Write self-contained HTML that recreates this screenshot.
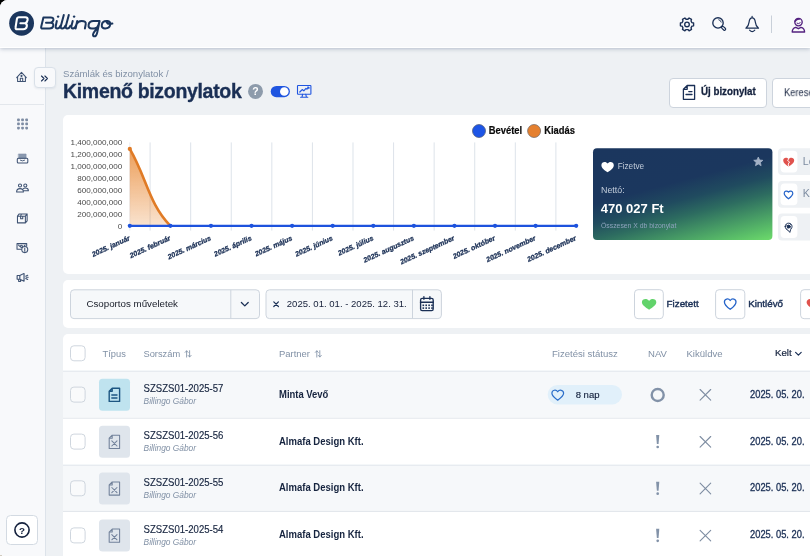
<!DOCTYPE html>
<html lang="hu">
<head>
<meta charset="utf-8">
<title>Billingo</title>
<style>
*{box-sizing:border-box;margin:0;padding:0}
html,body{width:810px;height:556px;overflow:hidden;background:#000}
body{font-family:"Liberation Sans",sans-serif;color:#1a2f55;position:relative}
#app{position:absolute;left:0;top:0;width:810px;height:556px;background:#eef1f4;border-top-left-radius:7.5px;overflow:hidden}
.abs{position:absolute}
#app,#header,#side,.card,.t,svg{will-change:transform}
#header{position:absolute;left:0;top:0;width:810px;height:48px;background:#f8f9fb;border-bottom:1px solid #fff;box-shadow:0 1px 4px rgba(45,70,110,.3);z-index:5}
#side{position:absolute;left:0;top:47px;width:46px;height:509px;background:#f8f9fb;border-right:1.6px solid #dde3ea;z-index:2}
.t{position:absolute;white-space:nowrap;line-height:1}
.card{position:absolute;background:#fff;border-radius:5px}
</style>
</head>
<body>
<div id="app">

<!-- HEADER -->
<div id="header">
<svg class="abs" style="left:0;top:0" width="810" height="48" viewBox="0 0 810 48">
  <!-- logo mark -->
  <circle cx="21.6" cy="23.3" r="12.4" fill="#1b365d"/>
  <path d="M18.6 17.3 H25.4 Q28 17.3 27.6 20 Q27.2 22.6 25.2 23.2 Q27.2 23.8 26.8 26.4 Q26.3 29.3 23.2 29.3 H17.2 Q15.2 29.3 15.6 27.2 L16.9 19.2 Q17.2 17.3 18.9 17.3 M20.4 23.3 H25" fill="none" stroke="#fff" stroke-width="2.1" stroke-linecap="round" stroke-linejoin="round"/>
  <!-- wordmark -->
  <g fill="none" stroke="#1b365d" stroke-width="2" stroke-linecap="round" stroke-linejoin="round">
    <path d="M43.4 17.4 L41.2 26.8 Q40.8 28.6 42.6 28.6 H49.4 Q52.8 28.6 53.3 25.6 Q53.7 23 50.6 22.8 H46 M50.6 22.8 Q53 22.2 53.4 20 Q53.7 17.4 50.6 17.4 H43.4"/>
    <path d="M56.8 21 L55.7 26.2 Q55.3 28.5 57.3 28.4 Q59.4 28.3 60.4 25.8"/>
    <path d="M63.8 14.9 L60.8 26.2 Q60.3 28.5 62.3 28.4 Q64.3 28.3 65.3 25.8"/>
    <path d="M68.8 14.9 L65.8 26.2 Q65.3 28.5 67.3 28.4 Q69.3 28.3 70.3 25.8"/>
    <path d="M72.7 21 L71.4 26.2 Q71 28.5 73 28.4 Q75 28.3 76 25.6"/>
    <path d="M77.2 21 L75.6 28.5 M76.6 24.2 Q77.8 20.9 81.6 20.9 Q86.4 20.9 85.7 24.4 L84.9 28.5"/>
    <path d="M99.6 21 H93.4 Q89.2 21 88.6 24.8 Q88.1 28.4 91.8 28.4 H94.2 Q97.6 28.4 98.4 25 L99.6 21 L97.2 32.6 Q96.2 37 93.8 36.2 Q91.8 35.4 94.6 31.4 Q95.8 29.8 98 28.4"/>
    <path d="M106.8 21 Q102.4 20.8 101.8 24.8 Q101.4 28.4 105.2 28.4 Q109.6 28.4 110.2 24.6 Q110.6 21.4 107.6 21 Q106.4 21 106.8 22.4 Q107.6 24.6 112.4 23.6"/>
  </g>
  <circle cx="58.1" cy="16.6" r="1.2" fill="#1b365d"/>
  <circle cx="74.1" cy="16.6" r="1.2" fill="#1b365d"/>

  <!-- gear -->
  <g fill="none" stroke="#1a2f55" stroke-width="1.35" stroke-linejoin="round" stroke-linecap="round">
    <path d="M693.60 23.00 L693.60 25.80 L691.94 26.18 L691.01 27.79 L691.52 29.42 L689.09 30.82 L687.93 29.57 L686.07 29.57 L684.91 30.82 L682.48 29.42 L682.99 27.79 L682.06 26.18 L680.40 25.80 L680.40 23.00 L682.06 22.62 L682.99 21.01 L682.48 19.38 L684.91 17.98 L686.07 19.23 L687.93 19.23 L689.09 17.98 L691.52 19.38 L691.01 21.01 L691.94 22.62 Z"/>
    <circle cx="687" cy="24.4" r="2.3"/>
  </g>
  <!-- search -->
  <g fill="none" stroke="#1a2f55" stroke-width="1.35" stroke-linecap="round">
    <circle cx="718" cy="22.9" r="5.2"/>
    <path d="M718.8 19.7 A3.2 3.2 0 0 1 721.2 22.1" stroke-width=".9"/>
    <path d="M722.7 27.5 L724.5 29.1" stroke-width="3.5"/>
    <path d="M722.7 27.5 L724.5 29.1" stroke-width="1.1" stroke="#f8f9fb"/>
  </g>
  <!-- bell -->
  <g fill="none" stroke="#1a2f55" stroke-width="1.25" stroke-linecap="round" stroke-linejoin="round">
    <path d="M752.1 16.4 V17.8 M752.1 17.8 C749.7 17.8 749.3 20 749.1 22 C748.9 24.6 748.2 26.2 745.9 28.2 H758.5 C756.2 26.2 755.5 24.6 755.3 22 C755.1 20 754.7 17.8 752.1 17.8 Z"/>
    <path d="M749.6 30.2 Q752.2 32.9 754.8 30.2" stroke-width="1.15"/>
  </g>
  <!-- divider -->
  <rect x="771" y="15.5" width="1" height="17.5" fill="#c9d0d9"/>
  <!-- avatar -->
  <g fill="none" stroke="#53217f" stroke-width="1.35" stroke-linecap="round" stroke-linejoin="round">
    <circle cx="798.5" cy="22.1" r="3.7"/>
    <path d="M795.2 21.2 Q796.4 18.8 799.4 19" stroke-width="1.6"/>
    <path d="M797 23.3 Q798.6 24.4 800.2 22.8" stroke-width="1"/>
    <path d="M792.2 32 Q792.4 27.8 795.8 27.3 L798.4 28.7 L801 27.3 Q804.4 27.8 804.6 32 Z"/>
  </g>
</svg>
</div>

<!-- SIDEBAR -->
<div id="side">
<div class="abs" style="left:0;top:57px;width:44px;height:1px;background:#e3e7ec"></div>
<svg class="abs" style="left:0;top:0" width="44" height="509" viewBox="0 47 44 509">
 <g fill="none" stroke="#3f5373" stroke-width="1.05" stroke-linejoin="round" stroke-linecap="round">
  <!-- home -->
  <path d="M16.7 77.6 L21.5 72.3 L26.3 77.6 M17.6 77 V81.4 H25.4 V77 M20.3 81.4 V78.3 H22.7 V81.4"/>
  <circle cx="21.5" cy="75.9" r=".55" fill="#3f5373"/>
  <!-- inbox -->
  <rect x="18.7" y="154" width="7.4" height="4.6" fill="#8a99af" stroke="#7f8fa6" stroke-width=".6"/>
  <rect x="17.3" y="158.3" width="10.5" height="4.6" rx="1"/>
  <path d="M20.4 160.3 Q22.5 161.6 24.6 160.3" stroke-width=".9"/>
  <!-- people -->
  <circle cx="20" cy="185.5" r="1.55"/><circle cx="25.3" cy="185.5" r="1.55"/>
  <path d="M16.6 192 Q16.6 188.6 20 188.6 Q23.4 188.6 23.4 192 Z"/>
  <path d="M23.2 188.8 Q24 188 25.3 188 Q28.4 188 28.4 190.8 H23.6"/>
  <!-- box -->
  <g transform="translate(22.3 218.4) scale(.88 .86) translate(-21.5 -218.2)"><path d="M16 215.6 L18 213 H27 V221 L25 223.4 H16 Z M16 215.6 H25 V223.4 M25 215.6 L27 213 M19.6 215.6 V218.6 H22 V215.6 M20.6 213 L19.6 215.6" stroke-width="1.2"/></g>
  <!-- money -->
  <g transform="translate(22.3 248.1) scale(.88 .9) translate(-21.6 -248.4)" stroke-width="1.2"><path d="M15.6 243.4 H26.6 V246.4 M15.6 243.4 V249.6 H20.4 M17.4 245 L18.6 246.4 M24.8 245 L23.8 246"/>
  <circle cx="24.4" cy="250" r="3.4"/><path d="M24.4 248.2 V251.8"/>
  <circle cx="20.6" cy="246.4" r="1.2"/></g>
  <!-- megaphone -->
  <g transform="translate(22.6 277.5) scale(.96 .82) translate(-21.5 -278)" stroke-width="1.2"><path d="M15.8 275.6 H18.6 L23 273 V282.6 L18.6 280 H15.8 Z M18.6 275.6 V280 M17.4 280 V283 H19.4 V280.4 M24.8 276.4 L26.8 275.2 M24.8 279.2 L26.8 280.4 M25.2 277.8 H27.4"/></g>
 </g>
 <!-- grid -->
 <g fill="#7d8ca3">
  <rect x="17.1" y="118.5" width="2.7" height="2.7" rx=".8"/><rect x="21.2" y="118.5" width="2.7" height="2.7" rx=".8"/><rect x="25.3" y="118.5" width="2.7" height="2.7" rx=".8"/>
  <rect x="17.1" y="122.6" width="2.7" height="2.7" rx=".8"/><rect x="21.2" y="122.6" width="2.7" height="2.7" rx=".8"/><rect x="25.3" y="122.6" width="2.7" height="2.7" rx=".8"/>
  <rect x="17.1" y="126.7" width="2.7" height="2.7" rx=".8"/><rect x="21.2" y="126.7" width="2.7" height="2.7" rx=".8"/><rect x="25.3" y="126.7" width="2.7" height="2.7" rx=".8"/>
 </g>
</svg>
<!-- help -->
<div class="abs" style="left:6.2px;top:467.9px;width:31.7px;height:29.9px;background:#fff;border:1px solid #d3dae2;border-radius:4.5px"></div>
<svg class="abs" style="left:14.1px;top:474.8px;overflow:visible" width="16" height="16" viewBox="0 0 16 16"><circle cx="8" cy="8" r="7.1" fill="none" stroke="#14213d" stroke-width="1.6"/><text x="8" y="11.5" font-family="Liberation Sans" font-size="9.8" font-weight="bold" fill="#14213d" text-anchor="middle">?</text></svg>
</div>
<!-- expand button -->
<div class="abs" style="left:34.2px;top:67.3px;width:21.4px;height:21.2px;background:#f8f9fb;border:1px solid #d9e0e8;border-radius:4px;z-index:3;box-shadow:0 1px 2px rgba(40,60,90,.08)"></div>
<svg class="abs" style="left:33.7px;top:67.5px;z-index:4" width="21" height="21" viewBox="0 0 21 21"><path d="M7.5 8 L10 10.5 L7.5 13 M10.9 8 L13.4 10.5 L10.9 13" fill="none" stroke="#1a2f55" stroke-width="1.1" stroke-linecap="round" stroke-linejoin="round"/></svg>

<!-- TITLE -->
<div class="t" id="bc" style="left:63px;top:69px;font-size:9.6px;color:#8090a5">Számlák és bizonylatok /</div>
<div class="t" id="ttl" style="left:63px;top:82.1px;font-size:19.5px;font-weight:bold;color:#1a2f55;letter-spacing:-.32px;-webkit-text-stroke:.35px #1a2f55">Kimenő bizonylatok</div>
<svg class="abs" style="left:245px;top:80px" width="70" height="22" viewBox="245 80 70 22">
  <circle cx="255.5" cy="91.4" r="7.5" fill="#8d9bab"/>
  <text x="255.5" y="95.2" font-family="Liberation Sans" font-size="10.5" font-weight="bold" fill="#fff" text-anchor="middle">?</text>
  <rect x="270.7" y="85.9" width="19.2" height="11.3" rx="5.65" fill="#1f55e0"/>
  <circle cx="284.3" cy="91.55" r="4.3" fill="#fff"/>
  <g fill="none" stroke="#1f55e0" stroke-width="1.1" stroke-linejoin="round" stroke-linecap="round">
    <rect x="297.5" y="85.5" width="13.4" height="8.8" rx=".6"/>
    <path d="M302.6 94.3 L302 97.2 M305.8 94.3 L306.4 97.2 M300.6 97.3 H307.8"/>
    <path d="M299.8 92 L302.2 89.6 L303.8 90.8 L306 88.4 L307 89.2 L308.8 87.4" stroke-width="1.2"/>
    <path d="M307.4 87.2 H308.9 V88.7" stroke-width="1"/>
  </g>
</svg>
<!-- buttons -->
<div class="abs" style="left:669px;top:78px;width:98px;height:30px;background:#fff;border:1px solid #cdd4dd;border-radius:4px"></div>
<svg class="abs" style="left:681px;top:84px" width="16" height="18" viewBox="681 84 16 18"><g fill="none" stroke="#1a2f55" stroke-width="1.15" stroke-linejoin="round" stroke-linecap="round"><path d="M687.2 85.5 H694.6 V99.3 H683.4 V89.3 Z M687.2 85.5 V89.3 H683.4 M688.8 91.6 H692 M686 94.5 H692" stroke-width="1.3"/></g></svg>
<div class="t" id="b1" style="left:701px;top:87.2px;font-size:9.75px;font-weight:bold;color:#14213d;-webkit-text-stroke:.28px #14213d;transform:scale(1,1.07);transform-origin:0 78%">Új bizonylat</div>
<div class="abs" style="left:772px;top:78px;width:60px;height:30px;background:#fff;border:1px solid #cdd4dd;border-radius:4px"></div>
<div class="t" id="b2" style="left:783.7px;top:87.6px;font-size:9.9px;color:#14213d;transform:scale(.95,1.1);transform-origin:0 78%">Keresés</div>

<!-- CHART CARD -->
<div class="card" id="chart" style="left:63px;top:115px;width:760px;height:159px">
<svg class="abs" style="left:0;top:0" width="747" height="160" viewBox="63 115.2 747 160">
<defs><linearGradient id="og" x1="0" y1="0" x2="0" y2="1"><stop offset="0" stop-color="#e67e22" stop-opacity=".75"/><stop offset="1" stop-color="#e67e22" stop-opacity=".22"/></linearGradient>
<linearGradient id="cg" gradientUnits="userSpaceOnUse" x1="665.2" y1="129.1" x2="700.2" y2="259.5"><stop offset="0" stop-color="#1b365e"/><stop offset=".40" stop-color="#1b375e"/><stop offset=".54" stop-color="#204b5f"/><stop offset=".66" stop-color="#2d6c60"/><stop offset=".80" stop-color="#469a65"/><stop offset=".91" stop-color="#5abe68"/><stop offset="1" stop-color="#6ddb6b"/></linearGradient></defs>
<rect x="149.59" y="142.6" width="1" height="88.2" fill="#dde3ea"/>
<rect x="190.17" y="142.6" width="1" height="88.2" fill="#dde3ea"/>
<rect x="230.75" y="142.6" width="1" height="88.2" fill="#dde3ea"/>
<rect x="271.33" y="142.6" width="1" height="88.2" fill="#dde3ea"/>
<rect x="311.91" y="142.6" width="1" height="88.2" fill="#dde3ea"/>
<rect x="352.49" y="142.6" width="1" height="88.2" fill="#dde3ea"/>
<rect x="393.07" y="142.6" width="1" height="88.2" fill="#dde3ea"/>
<rect x="433.65" y="142.6" width="1" height="88.2" fill="#dde3ea"/>
<rect x="474.23" y="142.6" width="1" height="88.2" fill="#dde3ea"/>
<rect x="514.81" y="142.6" width="1" height="88.2" fill="#dde3ea"/>
<rect x="555.39" y="142.6" width="1" height="88.2" fill="#dde3ea"/>
<rect x="129.30" y="142.6" width="1" height="88.2" fill="#e8ecf1"/>
<text x="122.3" y="145.50" font-family="Liberation Sans" font-size="8.1" fill="#4a4a4a" text-anchor="end">1,400,000,000</text>
<text x="122.3" y="157.41" font-family="Liberation Sans" font-size="8.1" fill="#4a4a4a" text-anchor="end">1,200,000,000</text>
<text x="122.3" y="169.33" font-family="Liberation Sans" font-size="8.1" fill="#4a4a4a" text-anchor="end">1,000,000,000</text>
<text x="122.3" y="181.24" font-family="Liberation Sans" font-size="8.1" fill="#4a4a4a" text-anchor="end">800,000,000</text>
<text x="122.3" y="193.16" font-family="Liberation Sans" font-size="8.1" fill="#4a4a4a" text-anchor="end">600,000,000</text>
<text x="122.3" y="205.07" font-family="Liberation Sans" font-size="8.1" fill="#4a4a4a" text-anchor="end">400,000,000</text>
<text x="122.3" y="216.98" font-family="Liberation Sans" font-size="8.1" fill="#4a4a4a" text-anchor="end">200,000,000</text>
<text x="122.3" y="228.90" font-family="Liberation Sans" font-size="8.1" fill="#4a4a4a" text-anchor="end">0</text>
<path d="M129.80 149.1 C 146.8 178.5 149 204.2 170.38 226 L 129.80 226 Z" fill="url(#og)"/>
<path d="M129.80 149.1 C 146.8 178.5 149 204.2 170.38 226" fill="none" stroke="#e07b26" stroke-width="2.6" stroke-linecap="round"/>
<circle cx="129.80" cy="149.1" r="2.1" fill="#e07b26"/>
<path d="M129.80 226 H576.18" stroke="#1d52dd" stroke-width="2.3" stroke-linecap="round"/>
<circle cx="129.80" cy="226" r="2.1" fill="#1d52dd"/>
<circle cx="170.38" cy="226" r="2.1" fill="#1d52dd"/>
<circle cx="210.96" cy="226" r="2.1" fill="#1d52dd"/>
<circle cx="251.54" cy="226" r="2.1" fill="#1d52dd"/>
<circle cx="292.12" cy="226" r="2.1" fill="#1d52dd"/>
<circle cx="332.70" cy="226" r="2.1" fill="#1d52dd"/>
<circle cx="373.28" cy="226" r="2.1" fill="#1d52dd"/>
<circle cx="413.86" cy="226" r="2.1" fill="#1d52dd"/>
<circle cx="454.44" cy="226" r="2.1" fill="#1d52dd"/>
<circle cx="495.02" cy="226" r="2.1" fill="#1d52dd"/>
<circle cx="535.60" cy="226" r="2.1" fill="#1d52dd"/>
<circle cx="576.18" cy="226" r="2.1" fill="#1d52dd"/>
<text transform="translate(128.30 235.2) rotate(-24.8)" x="0" y="5.2" font-family="Liberation Sans" font-size="7.1" font-weight="bold" font-style="italic" fill="#1a2f55" stroke="#1a2f55" stroke-width=".28" text-anchor="end">2025. január</text>
<text transform="translate(168.88 235.2) rotate(-24.8)" x="0" y="5.2" font-family="Liberation Sans" font-size="7.1" font-weight="bold" font-style="italic" fill="#1a2f55" stroke="#1a2f55" stroke-width=".28" text-anchor="end">2025. február</text>
<text transform="translate(209.46 235.2) rotate(-24.8)" x="0" y="5.2" font-family="Liberation Sans" font-size="7.1" font-weight="bold" font-style="italic" fill="#1a2f55" stroke="#1a2f55" stroke-width=".28" text-anchor="end">2025. március</text>
<text transform="translate(250.04 235.2) rotate(-24.8)" x="0" y="5.2" font-family="Liberation Sans" font-size="7.1" font-weight="bold" font-style="italic" fill="#1a2f55" stroke="#1a2f55" stroke-width=".28" text-anchor="end">2025. április</text>
<text transform="translate(290.62 235.2) rotate(-24.8)" x="0" y="5.2" font-family="Liberation Sans" font-size="7.1" font-weight="bold" font-style="italic" fill="#1a2f55" stroke="#1a2f55" stroke-width=".28" text-anchor="end">2025. május</text>
<text transform="translate(331.20 235.2) rotate(-24.8)" x="0" y="5.2" font-family="Liberation Sans" font-size="7.1" font-weight="bold" font-style="italic" fill="#1a2f55" stroke="#1a2f55" stroke-width=".28" text-anchor="end">2025. június</text>
<text transform="translate(371.78 235.2) rotate(-24.8)" x="0" y="5.2" font-family="Liberation Sans" font-size="7.1" font-weight="bold" font-style="italic" fill="#1a2f55" stroke="#1a2f55" stroke-width=".28" text-anchor="end">2025. július</text>
<text transform="translate(412.36 235.2) rotate(-24.8)" x="0" y="5.2" font-family="Liberation Sans" font-size="7.1" font-weight="bold" font-style="italic" fill="#1a2f55" stroke="#1a2f55" stroke-width=".28" text-anchor="end">2025. augusztus</text>
<text transform="translate(452.94 235.2) rotate(-24.8)" x="0" y="5.2" font-family="Liberation Sans" font-size="7.1" font-weight="bold" font-style="italic" fill="#1a2f55" stroke="#1a2f55" stroke-width=".28" text-anchor="end">2025. szeptember</text>
<text transform="translate(493.52 235.2) rotate(-24.8)" x="0" y="5.2" font-family="Liberation Sans" font-size="7.1" font-weight="bold" font-style="italic" fill="#1a2f55" stroke="#1a2f55" stroke-width=".28" text-anchor="end">2025. október</text>
<text transform="translate(534.10 235.2) rotate(-24.8)" x="0" y="5.2" font-family="Liberation Sans" font-size="7.1" font-weight="bold" font-style="italic" fill="#1a2f55" stroke="#1a2f55" stroke-width=".28" text-anchor="end">2025. november</text>
<text transform="translate(574.68 235.2) rotate(-24.8)" x="0" y="5.2" font-family="Liberation Sans" font-size="7.1" font-weight="bold" font-style="italic" fill="#1a2f55" stroke="#1a2f55" stroke-width=".28" text-anchor="end">2025. december</text>
<circle cx="479" cy="131.2" r="6.5" fill="#1d55e6" stroke="#4a5670" stroke-width=".7"/>
<text x="488.7" y="134.5" font-family="Liberation Sans" font-size="10.7" font-weight="bold" fill="#0a0a0a" stroke="#0a0a0a" stroke-width=".2" textLength="33.4" lengthAdjust="spacingAndGlyphs">Bevétel</text>
<circle cx="534.1" cy="131.2" r="6.5" fill="#e5802f" stroke="#6b6260" stroke-width=".7"/>
<text x="544.2" y="134.5" font-family="Liberation Sans" font-size="10.7" font-weight="bold" fill="#0a0a0a" stroke="#0a0a0a" stroke-width=".2" textLength="30.7" lengthAdjust="spacingAndGlyphs">Kiadás</text>
<rect x="593" y="148.5" width="179.4" height="91.6" rx="4" fill="url(#cg)"/>
<path d="M607.6 172.4 C604.4 170.4 601.4 168.2 601.4 165.4 C601.4 161.8 606 161.2 607.6 163.8 C609.2 161.2 613.8 161.8 613.8 165.4 C613.8 168.2 610.8 170.4 607.6 172.4 Z" fill="#fff"/>
<text x="617.7" y="169.6" font-family="Liberation Sans" font-size="8.2" fill="#c3cddb">Fizetve</text>
<polygon points="758.30,157.20 759.59,160.22 762.87,160.52 760.39,162.68 761.12,165.88 758.30,164.20 755.48,165.88 756.21,162.68 753.73,160.52 757.01,160.22" fill="#a3b2c6" stroke="#a3b2c6" stroke-width=".8" stroke-linejoin="round"/>
<text x="601" y="193.2" font-family="Liberation Sans" font-size="8.9" fill="#c3cddb">Nettó:</text>
<text x="600.8" y="213.2" font-family="Liberation Sans" font-size="13" font-weight="bold" fill="#fff">470 027 Ft</text>
<text x="601" y="228.6" font-family="Liberation Sans" font-size="6.85" fill="#8ea3bd">Összesen X db bizonylat</text>
<rect x="778" y="148.5" width="40" height="26.8" rx="4" fill="#eef1f4"/>
<rect x="780.6" y="151.0" width="16.8" height="21.8" rx="4" fill="#fff"/>
<rect x="778" y="181.1" width="40" height="26.8" rx="4" fill="#eef1f4"/>
<rect x="780.6" y="183.6" width="16.8" height="21.8" rx="4" fill="#fff"/>
<rect x="778" y="213.8" width="40" height="26.8" rx="4" fill="#eef1f4"/>
<rect x="780.6" y="216.3" width="16.8" height="21.8" rx="4" fill="#fff"/>
<path d="M788.6 166.8 C785.8 164.8 783.2 163 783.2 160.6 C783.2 157.8 786.8 157.2 788.6 159.4 C790.4 157.2 794.2 157.8 794.2 160.6 C794.2 163 791.4 164.8 788.6 166.8 Z" fill="#e0524d"/>
<path d="M788.8 158.8 L787.6 160.8 L789.6 162.2 L788.2 164.2 L788.8 166.6" fill="none" stroke="#fff" stroke-width=".9"/>
<text x="802.8" y="165" font-family="Liberation Sans" font-size="10.6" fill="#7d8ca1">Lejárt</text>
<path d="M788.5 199 C786 197.2 784.2 195.6 784.2 193.5 C784.2 191 787.2 190.5 788.5 192.4 C789.8 190.5 792.8 191 792.8 193.5 C792.8 195.6 791 197.2 788.5 199 Z" fill="none" stroke="#2463c9" stroke-width="1.2" stroke-linejoin="round"/>
<text x="802.8" y="197.6" font-family="Liberation Sans" font-size="10.6" fill="#7d8ca1">Kintlévő</text>
<g fill="none" stroke="#1a2f55" stroke-width="1" stroke-linejoin="round" stroke-linecap="round"><path d="M785.2 226.8 C785.2 224.6 786.8 223.4 788.6 223.4 C790.6 223.4 792 224.8 792 226.6 C792 228.2 791.2 229 790.6 229.8 L789.8 232.6 L788 230.4 C786.4 230 785.2 228.6 785.2 226.8 Z"/><circle cx="788.6" cy="226.8" r="1.5" fill="#1a2f55"/><path d="M786.2 225.2 L791 228.4 M787 228.6 L790.6 224.6" stroke-width=".7"/></g>
</svg>
</div>

<!-- TOOLBAR CARD -->
<div class="card" id="toolbar" style="left:63px;top:280.2px;width:760px;height:48.1px">
<svg class="abs" style="left:0;top:0" width="747" height="48" viewBox="63 280.1 747 48">
<rect x="70.5" y="289.9" width="189" height="28.8" rx="3.5" fill="#f6f8fa" stroke="#cdd4dd" stroke-width="1"/>
<rect x="230.3" y="289.9" width="1" height="28.8" fill="#cdd4dd"/>
<text x="86.4" y="307.2" font-family="Liberation Sans" font-size="9.75" fill="#181c28">Csoportos műveletek</text>
<path d="M241.4 302.6 L244.8 306 L248.2 302.6" fill="none" stroke="#1a2f55" stroke-width="1.3" stroke-linecap="round" stroke-linejoin="round"/>
<rect x="266" y="289.9" width="175.4" height="28.8" rx="3.5" fill="#f6f8fa" stroke="#cdd4dd" stroke-width="1"/>
<rect x="412" y="289.9" width="1" height="28.8" fill="#cdd4dd"/>
<path d="M273.8 302 L278.4 306.6 M278.4 302 L273.8 306.6" fill="none" stroke="#1a2f55" stroke-width="1.2" stroke-linecap="round"/>
<text x="286.8" y="307.2" font-family="Liberation Sans" font-size="9.55" fill="#16203a">2025. 01. 01. - 2025. 12. 31.</text>
<g fill="none" stroke="#1a2f55" stroke-width="1.35" stroke-linejoin="round" stroke-linecap="round"><rect x="420.6" y="298.4" width="12.6" height="12.4" rx="1.6"/><path d="M420.6 302.4 H433.2" stroke-width="1.6"/><path d="M423.9 296.8 V299.4 M429.9 296.8 V299.4"/></g>
<g fill="#1a2f55"><rect x="422.5" y="304.6" width="1.6" height="1.6"/><rect x="422.5" y="307.4" width="1.6" height="1.6"/><rect x="425.4" y="304.6" width="1.6" height="1.6"/><rect x="425.4" y="307.4" width="1.6" height="1.6"/><rect x="428.3" y="304.6" width="1.6" height="1.6"/><rect x="428.3" y="307.4" width="1.6" height="1.6"/><rect x="431.2" y="304.6" width="1.6" height="1.6"/><rect x="431.2" y="307.4" width="1.6" height="1.6"/></g>
<rect x="634.5" y="289.8" width="28.8" height="29" rx="3.5" fill="#fff" stroke="#cdd4dd"/>
<path d="M649.1 309.8 C645.4 307.4 641.9 305.2 641.9 302.4 C641.9 298.8 646.9 298 649.1 301 C651.3 298 656.3 298.8 656.3 302.4 C656.3 305.2 652.8 307.4 649.1 309.8 Z" fill="#62d36b"/>
<text x="666.6" y="307.6" font-family="Liberation Sans" font-size="9.8" fill="#1a2f55" stroke="#1a2f55" stroke-width=".4">Fizetett</text>
<rect x="715.6" y="289.8" width="29.2" height="29" rx="3.5" fill="#fff" stroke="#cdd4dd"/>
<path d="M730.2 309.4 C727 307 724.4 304.8 724.4 302 C724.4 298.8 728.4 298 730.2 300.6 C732 298 736 298.8 736 302 C736 304.8 733.4 307 730.2 309.4 Z" fill="none" stroke="#2463c9" stroke-width="1.3" stroke-linejoin="round"/>
<text x="748.2" y="307.6" font-family="Liberation Sans" font-size="9.8" fill="#1a2f55" stroke="#1a2f55" stroke-width=".4">Kintlévő</text>
<rect x="800.6" y="289.8" width="29.2" height="29" rx="3.5" fill="#fff" stroke="#cdd4dd"/>
<path d="M813.8 309.8 C810.1 307.4 806.6 305.2 806.6 302.4 C806.6 298.8 811.6 298 813.8 301 C816 298 821 298.8 821 302.4 C821 305.2 817.5 307.4 813.8 309.8 Z" fill="#e0524d"/>
</svg></div>

<!-- TABLE CARD -->
<div class="card" id="table" style="left:63px;top:334.3px;width:760px;height:230px;overflow:hidden">
<svg class="abs" style="left:0;top:0" width="747" height="222" viewBox="63 334.3 747 222">
<rect x="63" y="371.00" width="760" height="46.80" fill="#f6f8fa"/>
<rect x="63" y="465.00" width="760" height="46.80" fill="#f6f8fa"/>
<rect x="63" y="371.00" width="760" height="1" fill="#e1e6ec"/>
<rect x="63" y="418.00" width="760" height="1" fill="#e1e6ec"/>
<rect x="63" y="465.00" width="760" height="1" fill="#e1e6ec"/>
<rect x="63" y="511.20" width="760" height="1" fill="#e1e6ec"/>
<rect x="70.5" y="346.1" width="14.6" height="15" rx="3.4" fill="#fff" stroke="#cfd6de" stroke-width="1"/>
<text x="102.6" y="357.2" font-family="Liberation Sans" font-size="9.3" fill="#8090a5">Típus</text>
<text x="143.5" y="357.2" font-family="Liberation Sans" font-size="9.3" fill="#8090a5">Sorszám</text>
<text x="279" y="357.2" font-family="Liberation Sans" font-size="9.45" fill="#8090a5">Partner</text>
<g fill="none" stroke="#8090a5" stroke-width=".85" stroke-linecap="round" stroke-linejoin="round"><path d="M186.6 357.4 V351.2 M185.1 352.7 L186.6 351.1 L188.1 352.7"/><path d="M189.6 351.0 V357.2 M188.1 355.7 L189.6 357.3 L191.1 355.7"/></g>
<g fill="none" stroke="#8090a5" stroke-width=".85" stroke-linecap="round" stroke-linejoin="round"><path d="M316.8 357.4 V351.2 M315.3 352.7 L316.8 351.1 L318.3 352.7"/><path d="M319.8 351.0 V357.2 M318.3 355.7 L319.8 357.3 L321.3 355.7"/></g>
<text x="552" y="357.2" font-family="Liberation Sans" font-size="9.55" fill="#8090a5">Fizetési státusz</text>
<text x="648" y="357.2" font-family="Liberation Sans" font-size="9.55" fill="#8090a5">NAV</text>
<text x="686.5" y="357.2" font-family="Liberation Sans" font-size="9.55" fill="#8090a5">Kiküldve</text>
<text x="775" y="356.0" font-family="Liberation Sans" font-size="9.7" fill="#14213d" stroke="#14213d" stroke-width=".18">Kelt</text>
<path d="M795.6 352.6 L798.4 355.4 L801.2 352.6" fill="none" stroke="#1a2f55" stroke-width="1.2" stroke-linecap="round" stroke-linejoin="round"/>
<rect x="70.5" y="387.4" width="14.6" height="15" rx="3.4" fill="#f9fafb" stroke="#cfd6de" stroke-width="1"/>
<rect x="99" y="379.0" width="31" height="32" rx="3.5" fill="#bfe3ef"/>
<g fill="none" stroke="#1d5682" stroke-width="1.40" stroke-linejoin="round" stroke-linecap="round"><path d="M112.2 388.5 H119.6 V401.7 H109.2 V391.5 Z M112.2 388.5 V391.5 H109.2"/>
<path d="M111.8 395.3 H117.0 M111.8 398.3 H117.0"/></g>
<text x="143.6" y="392.2" font-family="Liberation Sans" font-size="10.15" fill="#16243f" stroke="#16243f" stroke-width=".15" textLength="79.8" lengthAdjust="spacingAndGlyphs">SZSZS01-2025-57</text>
<text x="143.6" y="404.6" font-family="Liberation Sans" font-size="8.35" font-style="italic" fill="#8090a5">Billingo Gábor</text>
<text x="279" y="397.9" font-family="Liberation Sans" font-size="10.4" font-weight="bold" fill="#16243f" textLength="49.4" lengthAdjust="spacingAndGlyphs">Minta Vevő</text>
<rect x="547.7" y="385.3" width="74.3" height="19.4" rx="9.7" fill="#e1f0fa"/>
<path d="M557.7 400.5 C554.4 398.1 551.9 396.0 551.9 393.5 C551.9 390.2 556.1 389.5 557.7 392.1 C559.3 389.5 563.6 390.2 563.6 393.5 C563.6 396.0 561.0 398.1 557.7 400.5 Z" fill="none" stroke="#2a6dc9" stroke-width="1.2" stroke-linejoin="round"/>
<text x="575.7" y="398.3" font-family="Liberation Sans" font-size="9.5" fill="#14213d" stroke="#14213d" stroke-width=".15">8 nap</text>
<circle cx="657.7" cy="395.3" r="6" fill="none" stroke="#8292a8" stroke-width="2.4"/>
<path d="M700.1 389.8 L710.7 400.4 M710.7 389.8 L700.1 400.4" fill="none" stroke="#7d8ca1" stroke-width="1.1" stroke-linecap="round"/>
<text x="750" y="397.9" font-family="Liberation Sans" font-size="10.1" fill="#1a2f55" stroke="#1a2f55" stroke-width=".3" textLength="54.5" lengthAdjust="spacingAndGlyphs">2025. 05. 20.</text>
<rect x="70.5" y="434.4" width="14.6" height="15" rx="3.4" fill="#fff" stroke="#cfd6de" stroke-width="1"/>
<rect x="99" y="426.0" width="31" height="32" rx="3.5" fill="#dfe5ec"/>
<g fill="none" stroke="#71819a" stroke-width="1.05" stroke-linejoin="round" stroke-linecap="round"><path d="M112.2 435.5 H119.6 V448.7 H109.2 V438.5 Z M112.2 435.5 V438.5 H109.2"/>
<path d="M111.8 441.1 L117.0 446.3 M117.0 441.1 L111.8 446.3"/></g>
<text x="143.6" y="439.2" font-family="Liberation Sans" font-size="10.15" fill="#16243f" stroke="#16243f" stroke-width=".15" textLength="79.8" lengthAdjust="spacingAndGlyphs">SZSZS01-2025-56</text>
<text x="143.6" y="451.6" font-family="Liberation Sans" font-size="8.35" font-style="italic" fill="#8090a5">Billingo Gábor</text>
<text x="279" y="444.9" font-family="Liberation Sans" font-size="10.4" font-weight="bold" fill="#16243f" textLength="84.6" lengthAdjust="spacingAndGlyphs">Almafa Design Kft.</text>
<path d="M656.10 435.30 H659.30 L658.55 444.40 H656.85 Z" fill="#8292a8"/><circle cx="657.70" cy="447.30" r="1.35" fill="#8292a8"/>
<path d="M700.1 436.8 L710.7 447.4 M710.7 436.8 L700.1 447.4" fill="none" stroke="#7d8ca1" stroke-width="1.1" stroke-linecap="round"/>
<text x="750" y="444.9" font-family="Liberation Sans" font-size="10.1" fill="#1a2f55" stroke="#1a2f55" stroke-width=".3" textLength="54.5" lengthAdjust="spacingAndGlyphs">2025. 05. 20.</text>
<rect x="70.5" y="481.1" width="14.6" height="15" rx="3.4" fill="#f9fafb" stroke="#cfd6de" stroke-width="1"/>
<rect x="99" y="472.7" width="31" height="32" rx="3.5" fill="#dfe5ec"/>
<g fill="none" stroke="#71819a" stroke-width="1.05" stroke-linejoin="round" stroke-linecap="round"><path d="M112.2 482.2 H119.6 V495.4 H109.2 V485.2 Z M112.2 482.2 V485.2 H109.2"/>
<path d="M111.8 487.8 L117.0 493.0 M117.0 487.8 L111.8 493.0"/></g>
<text x="143.6" y="485.9" font-family="Liberation Sans" font-size="10.15" fill="#16243f" stroke="#16243f" stroke-width=".15" textLength="79.8" lengthAdjust="spacingAndGlyphs">SZSZS01-2025-55</text>
<text x="143.6" y="498.3" font-family="Liberation Sans" font-size="8.35" font-style="italic" fill="#8090a5">Billingo Gábor</text>
<text x="279" y="491.6" font-family="Liberation Sans" font-size="10.4" font-weight="bold" fill="#16243f" textLength="84.6" lengthAdjust="spacingAndGlyphs">Almafa Design Kft.</text>
<path d="M656.10 482.00 H659.30 L658.55 491.10 H656.85 Z" fill="#8292a8"/><circle cx="657.70" cy="494.00" r="1.35" fill="#8292a8"/>
<path d="M700.1 483.5 L710.7 494.1 M710.7 483.5 L700.1 494.1" fill="none" stroke="#7d8ca1" stroke-width="1.1" stroke-linecap="round"/>
<text x="750" y="491.6" font-family="Liberation Sans" font-size="10.1" fill="#1a2f55" stroke="#1a2f55" stroke-width=".3" textLength="54.5" lengthAdjust="spacingAndGlyphs">2025. 05. 20.</text>
<rect x="70.5" y="528.2" width="14.6" height="15" rx="3.4" fill="#fff" stroke="#cfd6de" stroke-width="1"/>
<rect x="99" y="519.8" width="31" height="32" rx="3.5" fill="#dfe5ec"/>
<g fill="none" stroke="#71819a" stroke-width="1.05" stroke-linejoin="round" stroke-linecap="round"><path d="M112.2 529.3 H119.6 V542.5 H109.2 V532.3 Z M112.2 529.3 V532.3 H109.2"/>
<path d="M111.8 534.9 L117.0 540.1 M117.0 534.9 L111.8 540.1"/></g>
<text x="143.6" y="533.0" font-family="Liberation Sans" font-size="10.15" fill="#16243f" stroke="#16243f" stroke-width=".15" textLength="79.8" lengthAdjust="spacingAndGlyphs">SZSZS01-2025-54</text>
<text x="143.6" y="545.4" font-family="Liberation Sans" font-size="8.35" font-style="italic" fill="#8090a5">Billingo Gábor</text>
<text x="279" y="538.7" font-family="Liberation Sans" font-size="10.4" font-weight="bold" fill="#16243f" textLength="84.6" lengthAdjust="spacingAndGlyphs">Almafa Design Kft.</text>
<path d="M656.10 529.10 H659.30 L658.55 538.20 H656.85 Z" fill="#8292a8"/><circle cx="657.70" cy="541.10" r="1.35" fill="#8292a8"/>
<path d="M700.1 530.6 L710.7 541.2 M710.7 530.6 L700.1 541.2" fill="none" stroke="#7d8ca1" stroke-width="1.1" stroke-linecap="round"/>
<text x="750" y="538.7" font-family="Liberation Sans" font-size="10.1" fill="#1a2f55" stroke="#1a2f55" stroke-width=".3" textLength="54.5" lengthAdjust="spacingAndGlyphs">2025. 05. 20.</text>
</svg></div>

<div class="abs" id="bl" style="left:0;top:554.6px;width:1.6px;height:1.4px;background:#d2cbbf;z-index:9"></div>
</div>
</body>
</html>
